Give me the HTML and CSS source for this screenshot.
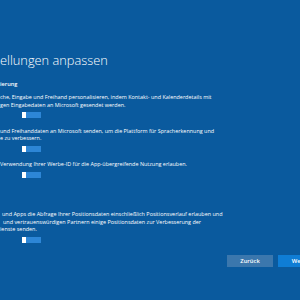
FILE: index.html
```html
<!DOCTYPE html>
<html lang="de">
<head>
<meta charset="utf-8">
<title>Einstellungen anpassen</title>
<link rel="stylesheet" href="styles.css">
</head>
<body>
<main class="page">
  <h1 class="title">ellungen anpassen</h1>
  <h2 class="group">ierung</h2>

  <section class="setting">
    <p class="text">
      <span class="line">che, Eingabe und Freihand personalisieren, indem Kontakt- und Kalenderdetails mit</span>
      <span class="line">gen Eingabedaten an Microsoft gesendet werden.</span>
    </p>
    <div class="toggle"><span class="thumb"></span></div>
  </section>

  <section class="setting">
    <p class="text">
      <span class="line">und Freihanddaten an Microsoft senden, um die Plattform für Spracherkennung und</span>
      <span class="line">e zu verbessern.</span>
    </p>
    <div class="toggle"><span class="thumb"></span></div>
  </section>

  <section class="setting">
    <p class="text">
      <span class="line">Verwendung Ihrer Werbe-ID für die App-übergreifende Nutzung erlauben.</span>
    </p>
    <div class="toggle"><span class="thumb"></span></div>
  </section>

  <section class="setting setting-group">
    <p class="text">
      <span class="line indent-a">und Apps die Abfrage Ihrer Positionsdaten einschließlich Positionsverlauf erlauben und</span>
      <span class="line indent-b">und vertrauenswürdigen Partnern einige Positionsdaten zur Verbesserung der</span>
      <span class="line">ienste senden.</span>
    </p>
    <div class="toggle"><span class="thumb"></span></div>
  </section>

  <div class="buttons">
    <button class="btn btn-secondary" type="button">Zurück</button>
    <button class="btn btn-primary" type="button">Weiter</button>
  </div>
</main>
</body>
</html>
```
FILE: styles.css
```css
html, body {
  margin: 0;
  padding: 0;
}

body {
  width: 300px;
  height: 300px;
  overflow: hidden;
  background: #0a5a9e;
  color: #ffffff;
  font-family: "Open Sans", "Noto Sans", "Liberation Sans", sans-serif;
}

.page {
  display: flex;
  flex-direction: column;
  padding-top: 52px;
}

.title {
  margin: 0;
  font-size: 12.8px;
  line-height: 16px;
  font-weight: 300;
  white-space: nowrap;
}

.group {
  margin: 12px 0 0 0;
  font-size: 5.6px;
  line-height: 8px;
  font-weight: 600;
}

.setting {
  display: flex;
  flex-direction: column;
  margin-top: 6px;
}

.setting + .setting {
  margin-top: 9.5px;
}

.setting.setting-group {
  margin-top: 33px;
}

.text {
  margin: 0;
  font-size: 5.45px;
  line-height: 7.6px;
  white-space: nowrap;
}

.line {
  display: block;
}

.indent-a {
  padding-left: 2px;
}

.indent-b {
  padding-left: 3px;
}

.toggle {
  margin: 3px 0 0 22px;
  width: 19px;
  height: 6px;
  background: #2d86d6;
  display: flex;
}

.thumb {
  width: 4px;
  height: 6px;
  background: #ffffff;
}

.buttons {
  display: flex;
  gap: 5px;
  margin: 12px 0 0 227px;
}

.btn {
  flex: none;
  width: 46px;
  height: 12px;
  padding: 0;
  border: none;
  color: #ffffff;
  font-family: "Open Sans", "Noto Sans", "Liberation Sans", sans-serif;
  font-size: 5.8px;
  font-weight: 600;
  line-height: 12px;
}

.btn-secondary {
  background: #3b77ad;
}

.btn-primary {
  background: #0f7dd5;
}
```
